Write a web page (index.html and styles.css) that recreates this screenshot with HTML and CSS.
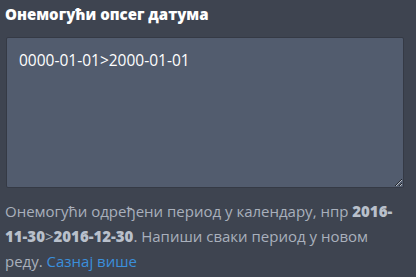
FILE: index.html
```html
<!DOCTYPE html>
<html lang="sr">
<head>
  <meta charset="UTF-8">
  <meta name="viewport" content="width=device-width, initial-scale=1.0">
  <title>Онемогући опсег датума</title>
  <link rel="stylesheet" href="styles.css">
</head>
<body>
  <div class="field">
    <label class="field-label" for="disabled-ranges">Онемогући опсег датума</label>
    <textarea id="disabled-ranges" class="field-input">0000-01-01&gt;2000-01-01</textarea>
    <p class="field-help">Онемогући одређени период у календару, нпр <strong>2016-11-30</strong>&gt;<strong>2016-12-30</strong>. Напиши сваки период у новом реду. <a href="#">Сазнај више</a></p>
  </div>
</body>
</html>
```

FILE: styles.css
```css
body {
  margin: 0;
  background: #3e4450;
  font-family: "Open Sans", Arial, sans-serif;
  font-size: 15px;
}
.field {
  padding: 4px 10px 0 5px;
}
.field-label {
  display: block;
  color: #fff;
  font-weight: 800;
  font-size: 15px;
  line-height: 20px;
  margin-bottom: 13px;
}
.field-input {
  display: block;
  box-sizing: border-box;
  width: 398px;
  height: 151px;
  margin: 0 0 0 1px;
  padding: 12px 12px;
  background: #525c6e;
  color: #fff;
  border: 1px solid #353a45;
  border-radius: 2px;
  font-family: inherit;
  font-size: 15.5px;
  line-height: 20px;
  resize: vertical;
}
.field-help {
  margin: 11px 0 0;
  color: #a9b0bc;
  line-height: 25px;
}
.field-help strong {
  font-weight: 800;
  color: #b9c0cb;
}
.field-help a {
  color: #3b8fdb;
  text-decoration: none;
}
```
